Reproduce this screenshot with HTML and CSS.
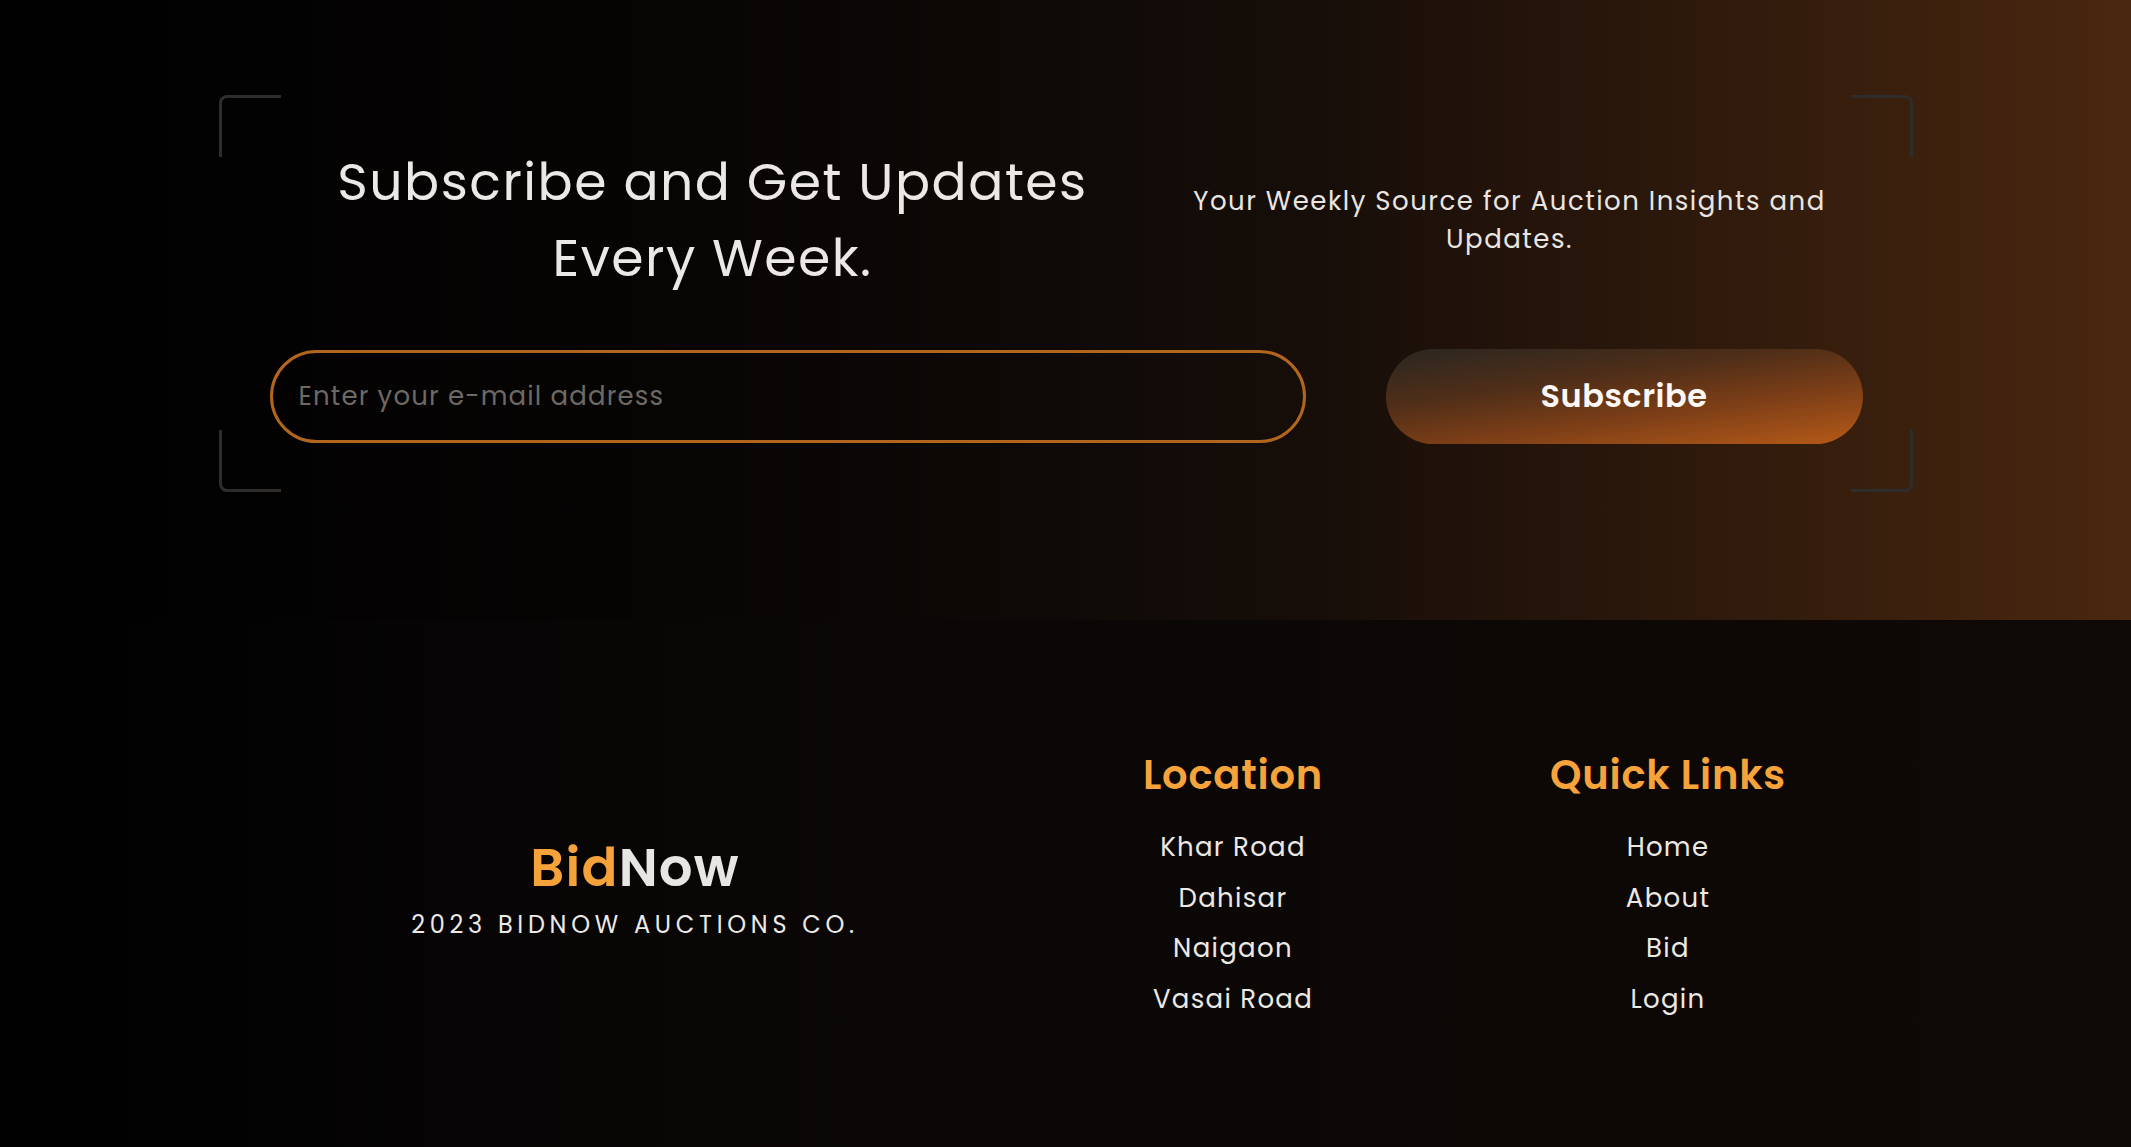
FILE: index.html
```html
<!DOCTYPE html>
<html lang="en">
<head>
<meta charset="utf-8">
<title>BidNow - Subscribe</title>
<link rel="stylesheet" href="styles.css">
</head>
<body>
<section class="subscribe">
  <div class="sub-box">
    <span class="corner corner-tl"></span>
    <span class="corner corner-tr"></span>
    <span class="corner corner-bl"></span>
    <span class="corner corner-br"></span>
    <div class="sub-top">
      <h2 class="sub-title">Subscribe and Get Updates Every Week.</h2>
      <p class="sub-tagline">Your Weekly Source for Auction Insights and Updates.</p>
    </div>
    <form class="sub-form" onsubmit="return false;">
      <input class="sub-input" type="email" placeholder="Enter your e-mail address">
      <button class="sub-button" type="submit">Subscribe</button>
    </form>
  </div>
</section>
<footer class="footer">
  <div class="brand">
    <div class="brand-name"><span class="brand-bid">Bid</span><span class="brand-now">Now</span></div>
    <div class="brand-copy">2023 BIDNOW AUCTIONS CO.</div>
  </div>
  <div class="foot-col">
    <h3 class="foot-head">Location</h3>
    <ul class="foot-list">
      <li>Khar Road</li>
      <li>Dahisar</li>
      <li>Naigaon</li>
      <li>Vasai Road</li>
    </ul>
  </div>
  <div class="foot-col foot-col-links">
    <h3 class="foot-head">Quick Links</h3>
    <ul class="foot-list">
      <li><a href="#">Home</a></li>
      <li><a href="#">About</a></li>
      <li><a href="#">Bid</a></li>
      <li><a href="#">Login</a></li>
    </ul>
  </div>
</footer>
</body>
</html>
```
FILE: styles.css
```css
* { box-sizing: border-box; }
html, body {
  margin: 0;
  padding: 0;
  background: #000;
  font-family: "Poppins", "Inter", "Open Sans", sans-serif;
}

.subscribe {
  height: 620px;
  padding-top: 95px;
  background: linear-gradient(to right, #000 0%, #090605 38%, #0f0a07 50%, #170e09 62%, #28160b 75%, #391f0d 88%, #4a2710 100%);
}

.sub-box {
  position: relative;
  width: 1694px;
  height: 397px;
  margin: 0 auto;
}

.corner {
  position: absolute;
  width: 62px;
  height: 62px;
  border: 0 solid #2f2d2c;
}
.corner-tl { left: 0; top: 0; border-top-width: 3px; border-left-width: 3px; border-top-left-radius: 8px; }
.corner-tr { right: 0; top: 0; border-top-width: 3px; border-right-width: 3px; border-top-right-radius: 8px; }
.corner-bl { left: 0; bottom: 0; border-bottom-width: 3px; border-left-width: 3px; border-bottom-left-radius: 8px; }
.corner-br { right: 0; bottom: 0; border-bottom-width: 3px; border-right-width: 3px; border-bottom-right-radius: 8px; }

.sub-top {
  display: flex;
  align-items: center;
  padding-top: 49px;
  padding-left: 94px;
}

.sub-title {
  width: 800px;
  margin: 0;
  font-size: 52px;
  line-height: 76px;
  font-weight: 400;
  letter-spacing: 1.5px;
  color: #ebe8e5;
  text-align: center;
}

.sub-tagline {
  width: 680px;
  margin: 0 0 0 57px;
  font-size: 26px;
  line-height: 38px;
  font-weight: 400;
  letter-spacing: 1.5px;
  color: #e9e5e1;
  text-align: center;
}

.sub-form {
  display: flex;
  align-items: center;
  gap: 80px;
  margin: 53px 0 0 0;
  padding-left: 51px;
}

.sub-input {
  width: 1036px;
  height: 93px;
  padding: 0 0 0 26px;
  border: 3px solid #b2661d;
  border-radius: 48px;
  background: transparent;
  font-family: inherit;
  font-size: 26px;
  letter-spacing: 1.15px;
  color: #ddd;
  outline: none;
}
.sub-input::placeholder { color: #6d6965; }

.sub-button {
  width: 477px;
  height: 95px;
  padding-bottom: 2px;
  border: 0;
  border-radius: 48px;
  background: linear-gradient(172deg, #2a2622 0%, #4f2e18 35%, #7e3f17 65%, #b65a18 100%);
  font-family: inherit;
  font-size: 32px;
  font-weight: 600;
  letter-spacing: 0.5px;
  color: #fbf8f5;
  cursor: pointer;
}

.footer {
  display: flex;
  align-items: flex-start;
  height: 527px;
  padding: 125px 0 0 253px;
  background: linear-gradient(to right, #000 0%, #060404 20%, #0a0706 40%, #0c0806 70%, #0f0907 100%);
}

.brand {
  width: 764px;
  margin-top: 92px;
  text-align: center;
}
.brand-name {
  font-size: 53px;
  line-height: 62px;
  font-weight: 600;
  letter-spacing: 1.2px;
}
.brand-bid { color: #f6a23a; }
.brand-now { color: #e8e6e3; }
.brand-copy {
  margin-top: 8px;
  font-size: 24px;
  line-height: 36px;
  letter-spacing: 4.7px;
  color: #ece9e6;
}

.foot-col {
  width: 432px;
  text-align: center;
}
.foot-col-links {
  margin-left: 3px;
}
.foot-head {
  margin: 0 0 17px 0;
  font-size: 40px;
  line-height: 60px;
  font-weight: 600;
  letter-spacing: 0.8px;
  color: #f7a33b;
}
.foot-list {
  list-style: none;
  margin: 0;
  padding: 0;
}
.foot-list li {
  font-size: 26px;
  line-height: 50.6px;
  letter-spacing: 1.3px;
  color: #ece8e4;
}
.foot-list a {
  color: inherit;
  text-decoration: none;
}
```
